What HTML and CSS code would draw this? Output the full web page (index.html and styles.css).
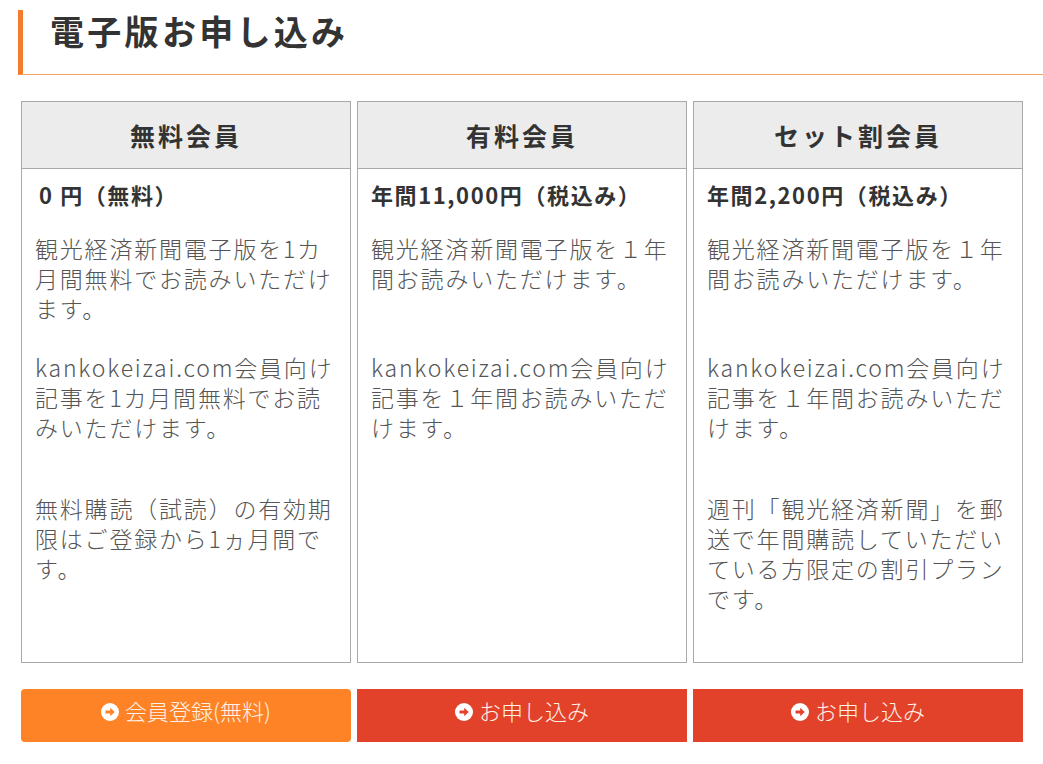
FILE: index.html
```html
<!DOCTYPE html>
<html lang="ja">
<head>
<meta charset="utf-8">
<title>電子版お申し込み</title>
<link rel="stylesheet" href="styles.css">
</head>
<body>
<div class="page">
  <h2 class="title">電子版お申し込み</h2>

  <div class="plans">
    <div class="card">
      <div class="card-head">無料会員</div>
      <div class="card-body">
        <p class="price price-free">0&nbsp;円（無料）</p>
        <p class="desc d1">観光経済新聞電子版を1カ月間無料でお読みいただけます。</p>
        <p class="desc d2">kankokeizai.com会員向け記事を1カ月間無料でお読みいただけます。</p>
        <p class="desc">無料購読（試読）の有効期限はご登録から1ヵ月間です。</p>
      </div>
    </div>
    <div class="card">
      <div class="card-head">有料会員</div>
      <div class="card-body">
        <p class="price">年間11,000円（税込み）</p>
        <p class="desc d1">観光経済新聞電子版を１年間お読みいただけます。</p>
        <p class="desc d2">kankokeizai.com会員向け記事を１年間お読みいただけます。</p>
      </div>
    </div>
    <div class="card">
      <div class="card-head">セット割会員</div>
      <div class="card-body">
        <p class="price">年間2,200円（税込み）</p>
        <p class="desc d1">観光経済新聞電子版を１年間お読みいただけます。</p>
        <p class="desc d2">kankokeizai.com会員向け記事を１年間お読みいただけます。</p>
        <p class="desc">週刊「観光経済新聞」を郵送で年間購読していただいている方限定の割引プランです。</p>
      </div>
    </div>

    <a class="btn btn-free" href="#">
      <svg class="ico" viewBox="0 0 16 16" width="18" height="18" aria-hidden="true"><circle cx="8" cy="8" r="8" fill="#fff"/><path d="M4 6.6h4.2V4.2L12.2 8l-4 3.8V9.4H4z" fill="#fe8326"/></svg><span class="btn-label">会員登録(無料)</span>
    </a>
    <a class="btn btn-apply" href="#">
      <svg class="ico" viewBox="0 0 16 16" width="18" height="18" aria-hidden="true"><circle cx="8" cy="8" r="8" fill="#fff"/><path d="M4 6.6h4.2V4.2L12.2 8l-4 3.8V9.4H4z" fill="#e2412a"/></svg><span class="btn-label">お申し込み</span>
    </a>
    <a class="btn btn-apply" href="#">
      <svg class="ico" viewBox="0 0 16 16" width="18" height="18" aria-hidden="true"><circle cx="8" cy="8" r="8" fill="#fff"/><path d="M4 6.6h4.2V4.2L12.2 8l-4 3.8V9.4H4z" fill="#e2412a"/></svg><span class="btn-label">お申し込み</span>
    </a>
  </div>
</div>
</body>
</html>
```

FILE: styles.css
```css
html, body {
  margin: 0;
  padding: 0;
  background: #fff;
}

body {
  font-family: "Noto Sans CJK JP", "Noto Sans", sans-serif;
  color: #333;
}

.page {
  padding: 10px 0 0 18px;
}

.title {
  margin: 0;
  height: 64px;
  box-sizing: content-box;
  border-left: 5px solid #f47c2c;
  border-bottom: 1px solid #f3a465;
  padding-left: 27px;
  font-size: 34px;
  font-weight: 700;
  letter-spacing: 3.3px;
  line-height: 42px;
  color: #333;
}

.plans {
  margin: 26px 0 0 3px;
  width: 1002px;
  display: grid;
  grid-template-columns: repeat(3, 330px);
  column-gap: 6px;
  row-gap: 26px;
}

.card {
  border: 1px solid #a9a9a9;
  display: flex;
  flex-direction: column;
  background: #fff;
}

.card-head {
  height: 66px;
  background: #ececec;
  border-bottom: 1px solid #a9a9a9;
  display: flex;
  align-items: center;
  justify-content: center;
  font-size: 25px;
  font-weight: 700;
  letter-spacing: 3px;
  color: #333;
}

.card-body {
  padding: 10px 13px 49px;
  flex: 1;
}

.price {
  margin: 0 0 24px;
  font-size: 22px;
  font-weight: 700;
  letter-spacing: 1.6px;
  line-height: 30px;
  color: #333;
}

.price-free {
  padding-left: 4px;
}

.desc {
  margin: 0;
  font-size: 23px;
  line-height: 30px;
  letter-spacing: 1.8px;
  font-weight: 300;
  color: #555;
}

.d1 {
  min-height: 90px;
  margin-bottom: 29px;
}

.d2 {
  min-height: 90px;
  margin-bottom: 51px;
}

.btn {
  height: 53px;
  box-sizing: border-box;
  padding-bottom: 12px;
  display: flex;
  align-items: center;
  justify-content: center;
  gap: 6px;
  color: #fdf1e6;
  text-decoration: none;
  font-size: 22px;
  font-weight: 300;
  line-height: 1;
}

.btn-label {
  display: block;
}

.btn-free {
  background: #fe8326;
  border-radius: 4px;
}

.btn-apply {
  background: #e2412a;
}

.ico {
  display: block;
  margin-top: 4px;
}
```
